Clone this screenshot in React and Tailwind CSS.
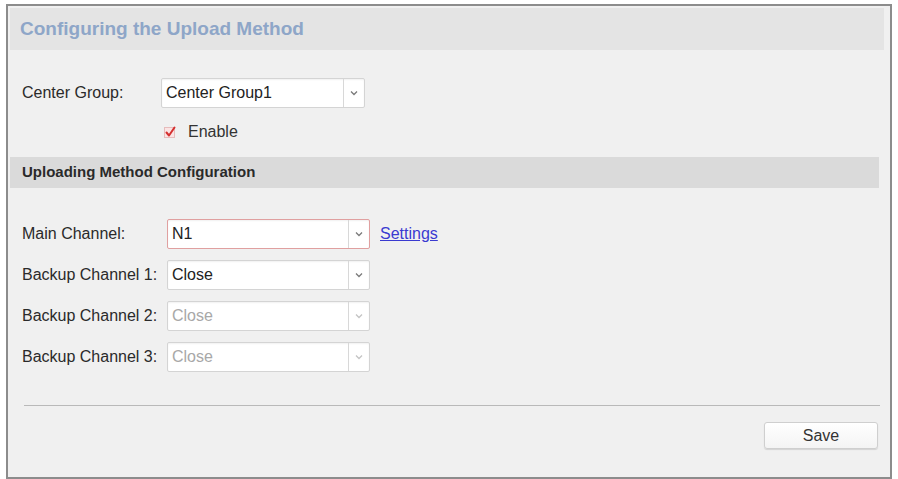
import React from 'react';

const Chevron = ({ disabled }) => (
  <svg width="8" height="6" viewBox="0 0 8 6">
    <path d="M1 1.5 L4 4.5 L7 1.5" fill="none" stroke={disabled ? '#c4c4c4' : '#7a7a7a'} strokeWidth="1.3" />
  </svg>
);

const Select = ({ value, width = 'w-[203px]', disabled, error }) => (
  <div
    className={`flex h-[30px] ${width} rounded-[2px] border bg-white shadow-[inset_0_1px_2px_rgba(0,0,0,0.06)] ${
      error ? 'border-[#e0a0a0]' : 'border-[#d4d4d4]'
    }`}
  >
    <div className={`flex-1 flex items-center pl-[4px] text-[16px] ${disabled ? 'text-[#a8a8a8]' : 'text-[#222]'}`}>
      {value}
    </div>
    <div className="w-[21px] flex items-center justify-center border-l border-[#d8d8d8]">
      <Chevron disabled={disabled} />
    </div>
  </div>
);

const ChannelRow = ({ label, value, disabled, error, children }) => (
  <div className="flex items-center">
    <div className="w-[145px] text-[16px] text-[#2a2a2a]">{label}</div>
    <Select value={value} disabled={disabled} error={error} />
    {children}
  </div>
);

export default function App() {
  return (
    <div className="w-[898px] h-[479px] bg-white overflow-hidden pt-[4px]" style={{ fontFamily: '"Liberation Sans", Arial, sans-serif' }}>
      <div className="ml-[6px] w-[886px] h-[475px] border-2 border-[#8c8c8c] bg-[#f0f0f0] p-[2px] flex flex-col">
        {/* Header */}
        <div className="h-[42px] bg-[#e4e4e4] flex items-center pl-[10px] mr-[4px]">
          <span className="text-[19px] font-bold text-[#8ea6c8]">Configuring the Upload Method</span>
        </div>

        {/* Center group */}
        <div className="flex items-center mt-[28px] pl-[12px]">
          <div className="w-[139px] text-[16px] text-[#2a2a2a]">Center Group:</div>
          <Select value="Center Group1" width="w-[204px]" />
        </div>
        <div className="flex items-center mt-[12px] pl-[154px] gap-[12px]">
          <svg width="12" height="12" viewBox="0 0 12 12">
            <rect x="0.5" y="1.5" width="10" height="10" fill="#fbe4e4" stroke="#e6bcbc" />
            <path d="M2.5 6.5 L5 9.5 L10.5 1.5" fill="none" stroke="#d43030" strokeWidth="2" strokeLinecap="round" strokeLinejoin="round" />
          </svg>
          <span className="text-[16px] text-[#333]">Enable</span>
        </div>

        {/* Section bar */}
        <div className="mt-[13px] h-[31px] w-[869px] bg-[#dadada] flex items-center pl-[12px]">
          <span className="text-[15px] font-bold text-[#2a2a2a]">Uploading Method Configuration</span>
        </div>

        {/* Channels */}
        <div className="mt-[31px] pl-[12px] flex flex-col gap-[11px]">
          <ChannelRow label="Main Channel:" value="N1" error>
            <a className="ml-[10px] text-[16px] text-[#3a3ad0] underline">Settings</a>
          </ChannelRow>
          <ChannelRow label="Backup Channel 1:" value="Close" />
          <ChannelRow label="Backup Channel 2:" value="Close" disabled />
          <ChannelRow label="Backup Channel 3:" value="Close" disabled />
        </div>

        {/* Divider */}
        <div className="mt-[33px] ml-[14px] w-[856px] h-px bg-[#b9b9b9]" />

        {/* Save */}
        <div className="flex justify-end mt-[16px] pr-[10px]">
          <button className="w-[114px] h-[27px] rounded-[3px] border border-[#cfcfcf] bg-gradient-to-b from-white to-[#f4f4f4] shadow-[0_1px_1px_rgba(0,0,0,0.12)] text-[16px] text-[#333]">
            Save
          </button>
        </div>
      </div>
    </div>
  );
}
